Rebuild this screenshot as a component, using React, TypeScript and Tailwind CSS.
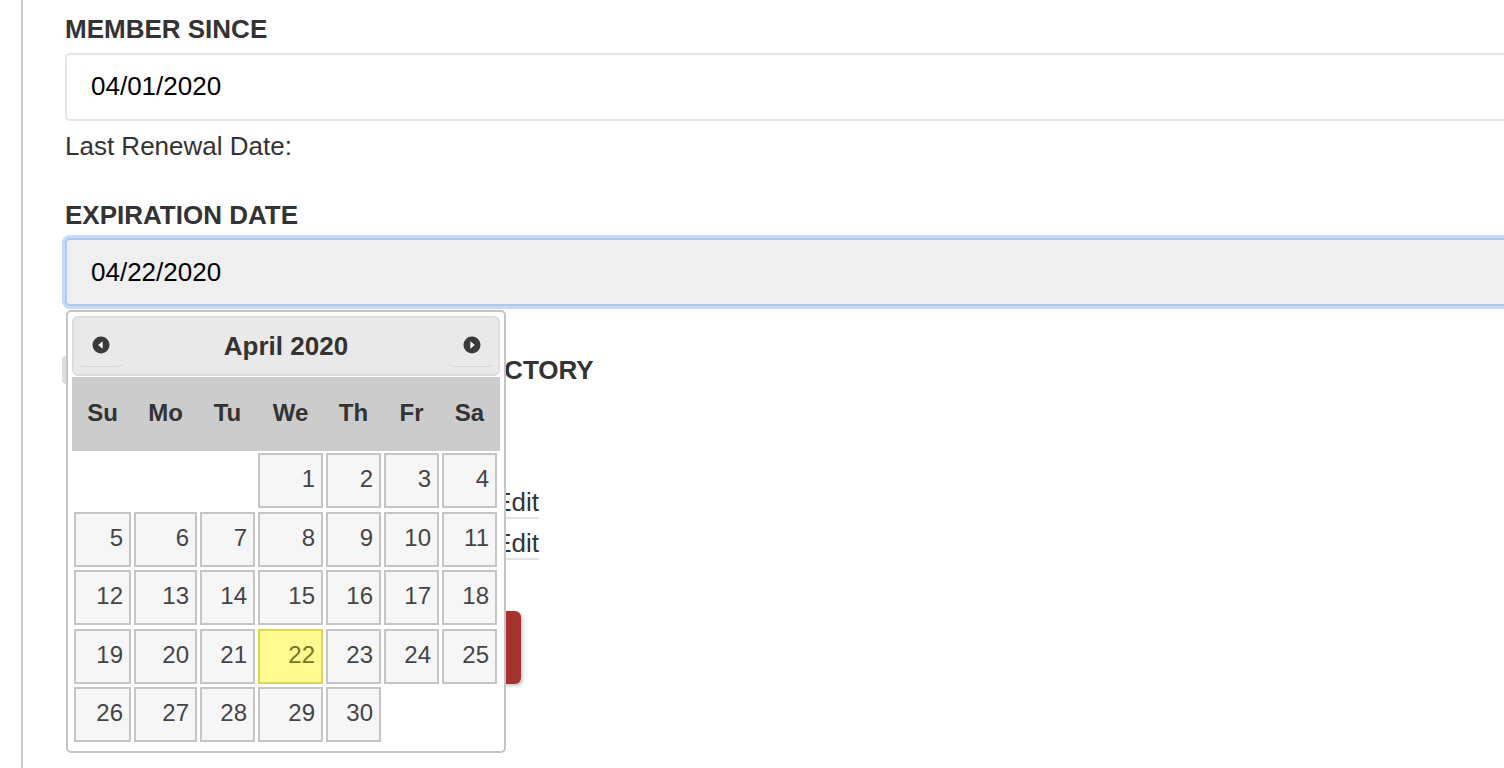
const WEEKDAYS = ['Su', 'Mo', 'Tu', 'We', 'Th', 'Fr', 'Sa']

// April 2020 starts on a Wednesday
const LEADING_BLANKS = 3
const DAYS_IN_MONTH = 30
const SELECTED_DAY = 22

function NavIcon({ direction }: { direction: 'prev' | 'next' }) {
    return (
        <svg width="18" height="18" viewBox="0 0 18 18" aria-hidden="true">
            <circle cx="9" cy="9" r="8.5" fill="#3a3a3a" />
            {direction === 'prev' ? (
                <polygon points="10.6,5.2 10.6,12.8 6.2,9" fill="#ffffff" />
            ) : (
                <polygon points="7.4,5.2 7.4,12.8 11.8,9" fill="#ffffff" />
            )}
        </svg>
    )
}

function DayCell({ day }: { day: number }) {
    const selected = day === SELECTED_DAY
    return (
        <div
            className={
                selected
                    ? 'flex items-center justify-end border-2 border-[#dad55e] bg-[#fffa90] pr-[6px] pb-[3px] text-[24px] text-[#777620]'
                    : 'flex items-center justify-end border-2 border-[#c5c5c5] bg-[#f6f6f6] pr-[6px] pb-[3px] text-[24px] text-[#454545]'
            }
        >
            {day}
        </div>
    )
}

function DatePicker() {
    const days = Array.from({ length: DAYS_IN_MONTH }, (_, i) => i + 1)
    return (
        <div className="absolute left-[1px] top-[296px] h-[443px] w-[440px] rounded-[5px] border-2 border-[#c5c5c5] bg-white p-[4px]">
            <div className="relative flex h-[60px] items-center justify-center rounded-[6px] border-2 border-[#dddddd] bg-[#e9e9e9]">
                <button className="absolute left-[3px] top-[4px] flex h-[45px] w-[47px] items-center justify-center rounded-[6px] border border-[#e6e6e6] border-b-[#d8d8d8]">
                    <NavIcon direction="prev" />
                </button>
                <span className="text-[26px] font-bold leading-[30px] text-[#333333]">April 2020</span>
                <button className="absolute right-[3px] top-[4px] flex h-[45px] w-[47px] items-center justify-center rounded-[6px] border border-[#e6e6e6] border-b-[#d8d8d8]">
                    <NavIcon direction="next" />
                </button>
            </div>
            <div className="mt-[1px] grid h-[74px] grid-cols-[57px_63px_55px_65px_55px_55px_55px] gap-x-[3px] bg-[#cccccc] px-[2px]">
                {WEEKDAYS.map((d) => (
                    <div key={d} className="flex items-center justify-center pb-[3px] text-[24px] font-bold text-[#333333]">
                        {d}
                    </div>
                ))}
            </div>
            <div className="mt-[2px] grid grid-cols-[57px_63px_55px_65px_55px_55px_55px] auto-rows-[55px] gap-x-[3px] gap-y-[3.5px] px-[2px]">
                {Array.from({ length: LEADING_BLANKS }, (_, i) => (
                    <div key={`blank-${i}`} />
                ))}
                {days.map((day) => (
                    <DayCell key={day} day={day} />
                ))}
            </div>
        </div>
    )
}

export default function App() {
    return (
        <div className="h-screen w-screen overflow-hidden bg-white font-['Liberation_Sans',Arial,sans-serif]">
            <div className="ml-[21px] h-full border-l-2 border-[#cccccc] pl-[42px] pt-[15px]">
                <div className="relative">
                    <h3 className="-mt-[1px] text-[26px] font-bold leading-[30px] text-[#333333]">MEMBER SINCE</h3>
                    <div className="mt-[9px] flex h-[68px] w-[1460px] items-center rounded-[5px] border-2 border-[#e4e4e4] pl-[24px] pb-[2px] text-[26px] leading-[30px] text-black">
                        04/01/2020
                    </div>
                    <p className="mt-[10px] text-[26px] leading-[30px] text-[#333333]">Last Renewal Date:</p>

                    <h3 className="mt-[39px] text-[26px] font-bold leading-[30px] text-[#333333]">EXPIRATION DATE</h3>
                    <div className="mt-[8px] flex h-[68px] w-[1460px] items-center rounded-[5px] border-2 border-[#b3c8e8] bg-[#efefef] pl-[24px] text-[26px] leading-[30px] text-black shadow-[0_0_0_3px_#c6dbfb]">
                        04/22/2020
                    </div>

                    <div className="mt-[49px] -ml-[3px] flex items-center gap-[4px]">
                        <span className="h-[28px] w-[12px] rounded-[4px] bg-[#dddddd]" />
                        <h3 className="text-[26px] font-bold leading-[30px] text-[#333333]">SHOW PROFILE IN MEMBER DIRECTORY</h3>
                    </div>

                    <div className="mt-[93px] ml-[8px] w-[466px] text-[26px] leading-[30px] text-[#333333]">
                        <div className="flex justify-end border-b-2 border-[#e3e3e3] pt-[9px]">
                            <a>Edit</a>
                        </div>
                        <div className="flex justify-end border-b-2 border-[#e3e3e3] pt-[9px]">
                            <a>Edit</a>
                        </div>
                    </div>

                    <div className="mt-[51px] ml-[8px] h-[73px] w-[448px] rounded-[6px] bg-[#a6332e] shadow-[2px_2px_3px_rgba(0,0,0,0.2)]" />

                    <DatePicker />
                </div>
            </div>
        </div>
    )
}
